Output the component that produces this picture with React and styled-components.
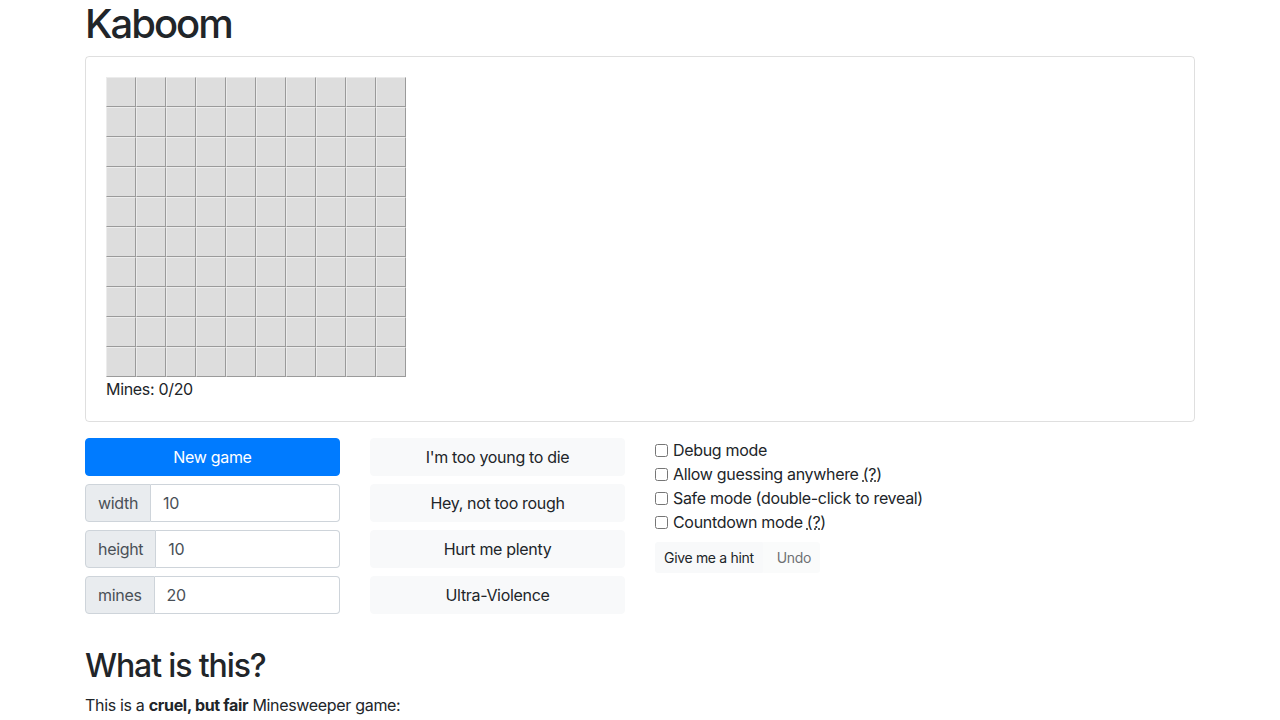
import styled, { createGlobalStyle } from "styled-components";

const Global = createGlobalStyle`
  body {
    margin: 0;
    font-family: Inter, "Noto Sans", "Liberation Sans", sans-serif;
    font-size: 16px;
    line-height: 1.5;
    letter-spacing: -0.02em;
    color: #212529;
    background: #fff;
  }
  * { box-sizing: border-box; }
`;

const Container = styled.div`
  width: 1140px;
  margin: 0 auto;
  padding: 0 15px;
`;

const Title = styled.h1`
  font-size: 40px;
  font-weight: 500;
  line-height: 1.2;
  letter-spacing: -0.05em;
  margin: 0 0 8px;
`;

const Card = styled.div`
  border: 1px solid rgba(0, 0, 0, 0.125);
  border-radius: 4px;
  padding: 20px;
  margin-bottom: 16px;
`;

const Board = styled.div`
  display: grid;
  grid-template-columns: repeat(${(p) => p.cols}, 30px);
  grid-auto-rows: 30px;
  width: max-content;
`;

const Cell = styled.div`
  background: #dddddd;
  border: 1px solid;
  border-color: #ececec #9a9a9a #9a9a9a #ececec;
`;

const Row = styled.div`
  display: grid;
  grid-template-columns: repeat(3, 255px);
  column-gap: 30px;
  align-items: start;
`;

const Stack = styled.div`
  display: flex;
  flex-direction: column;
  gap: 8px;
`;

const Button = styled.button`
  height: 38px;
  border-radius: 4px;
  border: 1px solid ${(p) => (p.$primary ? "#007bff" : "#f8f9fa")};
  background: ${(p) => (p.$primary ? "#007bff" : "#f8f9fa")};
  color: ${(p) => (p.$primary ? "#fff" : "#212529")};
  font-family: inherit;
  font-size: 16px;
  letter-spacing: inherit;
  padding: 6px 12px;
  cursor: pointer;
`;

const InputGroup = styled.div`
  display: flex;
  height: 38px;
`;

const Addon = styled.span`
  display: flex;
  align-items: center;
  padding: 6px 12px;
  background: #e9ecef;
  border: 1px solid #ced4da;
  border-radius: 4px 0 0 4px;
  color: #495057;
`;

const Input = styled.input`
  flex: 1;
  min-width: 0;
  border: 1px solid #ced4da;
  border-left: none;
  border-radius: 0 4px 4px 0;
  padding: 6px 12px;
  font-family: inherit;
  font-size: 16px;
  letter-spacing: inherit;
  color: #495057;
`;

const Check = styled.label`
  display: flex;
  align-items: center;
  line-height: 24px;
  white-space: nowrap;
  input {
    width: 13px;
    height: 13px;
    margin: 0 5px 0 0;
  }
`;

const Abbr = styled.abbr`
  text-decoration: underline dotted;
  cursor: help;
`;

const BtnGroup = styled.div`
  display: inline-flex;
  margin-top: 8px;
  align-self: flex-start;
`;

const SmallBtn = styled.button`
  height: 31px;
  padding: 4px 8px;
  font-family: inherit;
  font-size: 14px;
  letter-spacing: inherit;
  border: 1px solid #f8f9fa;
  background: #f8f9fa;
  color: #212529;
  opacity: ${(p) => (p.disabled ? 0.65 : 1)};
  border-radius: ${(p) => (p.$last ? "0 3px 3px 0" : "3px 0 0 3px")};
  padding-left: ${(p) => (p.$last ? "13px" : "8px")};
`;

const Checks = styled.div`
  display: flex;
  flex-direction: column;
`;

const H2 = styled.h2`
  font-size: 32px;
  font-weight: 500;
  line-height: 1.2;
  letter-spacing: -0.035em;
  margin: 33px 0 8px;
`;

const P = styled.p`
  margin: 0;
`;

export default function App() {
  const cells = Array.from({ length: 100 });
  return (
    <Container>
      <Global />
      <Title>Kaboom</Title>
      <Card>
        <Board cols={10}>
          {cells.map((_, i) => (
            <Cell key={i} />
          ))}
        </Board>
        <div>Mines: 0/20</div>
      </Card>
      <Row>
        <Stack>
          <Button $primary>New game</Button>
          <InputGroup>
            <Addon>width</Addon>
            <Input defaultValue="10" />
          </InputGroup>
          <InputGroup>
            <Addon>height</Addon>
            <Input defaultValue="10" />
          </InputGroup>
          <InputGroup>
            <Addon>mines</Addon>
            <Input defaultValue="20" />
          </InputGroup>
        </Stack>
        <Stack>
          <Button>I'm too young to die</Button>
          <Button>Hey, not too rough</Button>
          <Button>Hurt me plenty</Button>
          <Button>Ultra-Violence</Button>
        </Stack>
        <Checks>
          <Check>
            <input type="checkbox" />
            Debug mode
          </Check>
          <Check>
            <input type="checkbox" />
            Allow guessing anywhere&nbsp;<Abbr title="">(?)</Abbr>
          </Check>
          <Check>
            <input type="checkbox" />
            Safe mode (double-click to reveal)
          </Check>
          <Check>
            <input type="checkbox" />
            Countdown mode&nbsp;<Abbr title="">(?)</Abbr>
          </Check>
          <BtnGroup>
            <SmallBtn>Give me a hint</SmallBtn>
            <SmallBtn $last disabled>
              Undo
            </SmallBtn>
          </BtnGroup>
        </Checks>
      </Row>
      <H2>What is this?</H2>
      <P>
        This is a <b>cruel, but fair</b> Minesweeper game:
      </P>
    </Container>
  );
}
